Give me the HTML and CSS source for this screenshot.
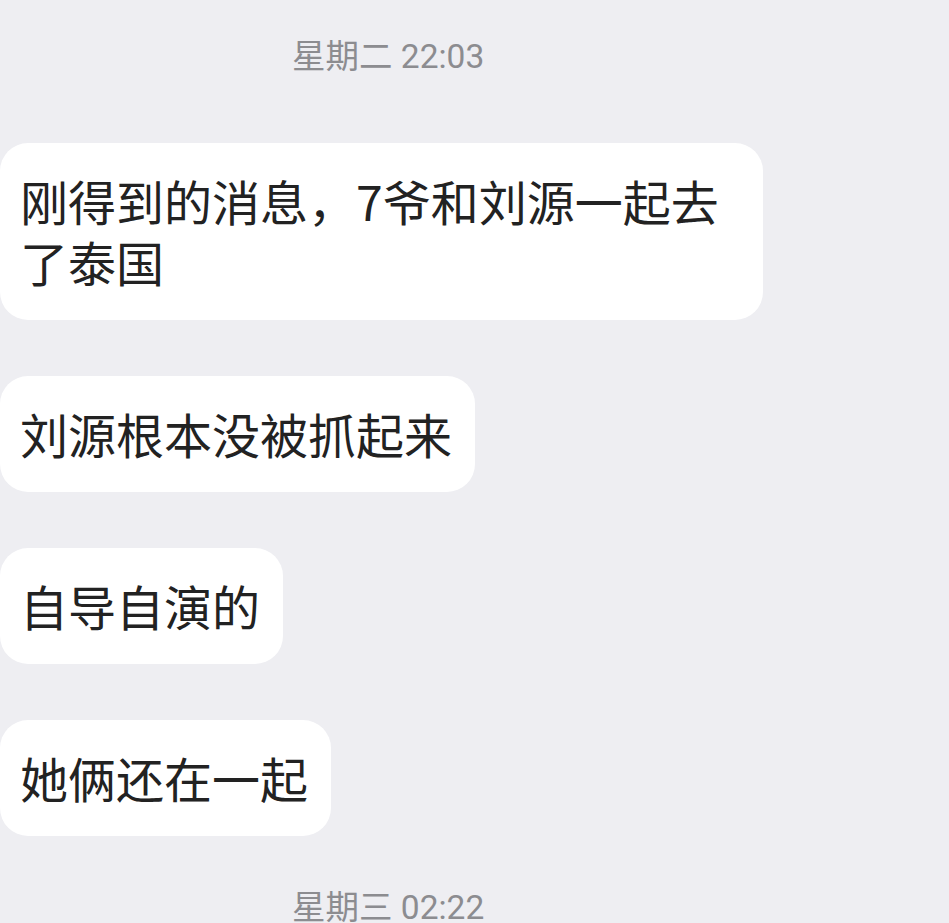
FILE: index.html
```html
<!DOCTYPE html>
<html lang="zh-CN">
<head>
<meta charset="utf-8">
<title>Chat</title>
<link rel="stylesheet" href="styles.css">
</head>
<body>
<div class="chat">
  <div class="time time-first">星期二 22:03</div>
  <div class="bubble bubble-wide">刚得到的消息，7爷和刘源一起去了泰国</div>
  <div class="bubble">刘源根本没被抓起来</div>
  <div class="bubble">自导自演的</div>
  <div class="bubble">她俩还在一起</div>
  <div class="time time-last">星期三 02:22</div>
</div>
</body>
</html>
```
FILE: styles.css
```css
html, body {
  margin: 0;
  padding: 0;
  background: #eeeef2;
  height: 100%;
  overflow: hidden;
}
.chat {
  display: flex;
  flex-direction: column;
  align-items: flex-start;
  gap: 56px;
  padding-top: 37px;
  font-family: "Noto Sans CJK SC", sans-serif;
}
.time {
  padding-left: 292px;
  font-family: "Roboto", "Noto Sans CJK SC", sans-serif;
  font-size: 33.5px;
  line-height: 40px;
  color: #8c8c90;
}
.time-first {
  margin-bottom: 10px;
}
.time-last {
  margin-top: -4px;
}
.bubble {
  box-sizing: border-box;
  max-width: 763px;
  background: #ffffff;
  border-radius: 28px;
  padding: 27px 23px 28px 20px;
  font-size: 48px;
  line-height: 61px;
  color: #222222;
}
.bubble-wide {
  width: 763px;
}
```
